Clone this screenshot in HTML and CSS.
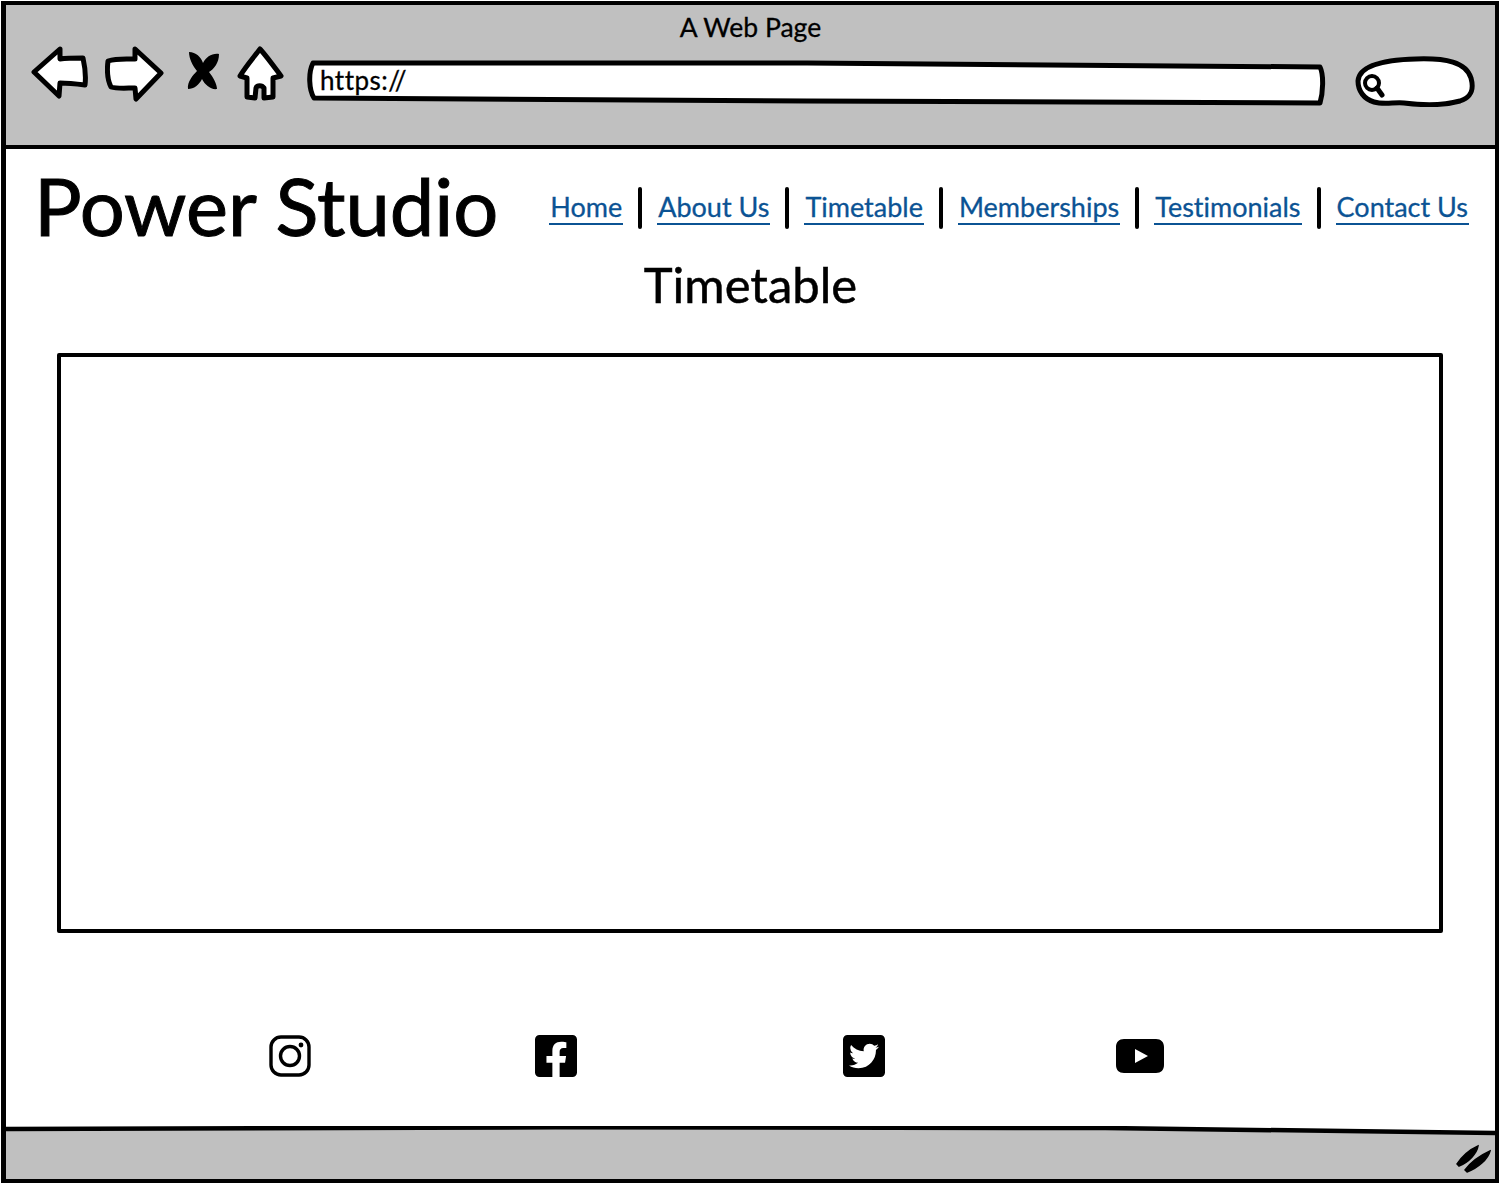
FILE: index.html
```html
<!DOCTYPE html>
<html lang="en">
<head>
  <meta charset="UTF-8">
  <title>Power Studio - Timetable</title>
  <link rel="stylesheet" href="styles.css">
</head>
<body>
  <div class="window">
    <div class="browser-bar">
      <div class="page-title">A Web Page</div>
      <div class="toolbar">
        <svg class="tool back" viewBox="0 0 58 62"><path d="M29 4 L3 27 L28 51 L29 38 C38 38 46 39 54 40 C55 32 54 22 52 13 C44 13 36 13 29 14 Z" fill="#fff" stroke="#000" stroke-width="5" stroke-linejoin="round"/></svg>
        <svg class="tool forward" viewBox="0 0 60 62"><path d="M30 4 L56 28 L31 54 L30 43 C22 43 12 44 6 42 C2 34 2 24 3 16 C12 13 22 14 30 14 Z" fill="#fff" stroke="#000" stroke-width="5" stroke-linejoin="round"/></svg>
        <svg class="tool stop" viewBox="0 0 34 62"><path d="M3 7 C10 7 15 12 17 18 C20 12 26 8 33 9 C33 18 28 24 23 27 C27 32 31 39 31 44 C25 45 19 40 16 34 C13 40 8 44 2 44 C1 37 7 30 11 26 C7 21 3 14 3 7 Z" fill="#000"/></svg>
        <svg class="tool home" viewBox="0 0 47 62"><path d="M23 4 C31 13 38 23 44 31 L36 33 L36 52 L27 53 L27 43 C25 40 20 40 19 43 L18 53 L10 52 L10 33 L3 31 C9 21 17 12 23 4 Z" fill="#fff" stroke="#000" stroke-width="5" stroke-linejoin="round"/></svg>
        <div class="url-bar">
          <svg class="url-shape" viewBox="0 0 1020 62" preserveAspectRatio="none"><path d="M6 18 L500 18 C700 18 860 20 1013 22 C1017 30 1016 48 1013 58 L500 56 L7 53 C2 45 1 28 6 18 Z" fill="#fff" stroke="#000" stroke-width="5" stroke-linejoin="round"/></svg>
          <span class="url-text">https://</span>
        </div>
        <svg class="tool search" viewBox="0 0 122 62"><path d="M4 36 C5 22 24 15 62 14 C92 13 112 17 117 33 C120 44 118 52 106 56 C88 61 66 60 50 58 C40 57 30 60 20 57 C10 54 4 46 4 36 Z" fill="#fff" stroke="#000" stroke-width="5"/><circle cx="18" cy="38" r="7" fill="none" stroke="#000" stroke-width="4"/><path d="M23 43 L28 50" stroke="#000" stroke-width="5" stroke-linecap="round"/></svg>
      </div>
    </div>

    <div class="page">
      <div class="site-header">
        <h1>Power Studio</h1>
        <nav class="nav">
          <a href="#">Home</a><span class="sep"></span>
          <a href="#">About Us</a><span class="sep"></span>
          <a href="#">Timetable</a><span class="sep"></span>
          <a href="#">Memberships</a><span class="sep"></span>
          <a href="#">Testimonials</a><span class="sep"></span>
          <a href="#">Contact Us</a>
        </nav>
      </div>

      <h2>Timetable</h2>
      <div class="timetable"></div>

      <div class="socials">
        <svg class="social" viewBox="0 0 42 42"><rect x="2" y="2" width="38" height="38" rx="10" fill="none" stroke="#000" stroke-width="3.4"/><circle cx="21" cy="21" r="9.5" fill="none" stroke="#000" stroke-width="3.4"/><circle cx="32" cy="10" r="2.4" fill="#000"/></svg>
        <svg class="social" viewBox="0 32 448 448"><path d="M400 32H48A48 48 0 0 0 0 80v352a48 48 0 0 0 48 48h137.25V327.69h-63V256h63v-54.64c0-62.15 37-96.48 93.67-96.48 27.14 0 55.52 4.84 55.52 4.84v61h-31.27c-30.81 0-40.42 19.12-40.42 38.73V256h68.78l-11 71.69h-57.78V480H400a48 48 0 0 0 48-48V80a48 48 0 0 0-48-48z"/></svg>
        <svg class="social" viewBox="0 32 448 448"><path d="M400 32H48C21.5 32 0 53.5 0 80v352c0 26.5 21.5 48 48 48h352c26.5 0 48-21.5 48-48V80c0-26.5-21.5-48-48-48zm-48.9 158.8c.2 2.8.2 5.7.2 8.5 0 86.7-66 186.6-186.6 186.6-37.2 0-71.7-10.8-100.7-29.4 5.3.6 10.4.8 15.8.8 30.7 0 58.9-10.4 81.4-28-28.8-.6-53-19.5-61.3-45.5 10.1 1.5 19.2 1.5 29.6-1.2-30-6.1-52.5-32.5-52.5-64.4v-.8c8.7 4.9 18.9 7.9 29.6 8.3a65.447 65.447 0 0 1-29.2-54.6c0-12.2 3.2-23.4 8.9-33.1 32.3 39.8 80.8 65.8 135.2 68.6-9.3-44.5 24-80.6 64-80.6 18.9 0 35.9 7.9 47.9 20.7 14.8-2.8 29-8.3 41.6-15.8-4.9 15.2-15.2 28-28.8 36.1 13.2-1.4 26-5.1 37.8-10.2-8.9 13.1-20.1 24.7-32.9 34z"/></svg>
        <svg class="social youtube" viewBox="0 0 48 34"><path d="M8 0 H40 C45 0 48 3 48 8 V26 C48 31 45 34 40 34 H8 C3 34 0 31 0 26 V8 C0 3 3 0 8 0 Z M19 10 V24 L32 17 Z" fill-rule="evenodd"/></svg>
      </div>
    </div>

    <svg class="status-bar" viewBox="0 0 1490 53" preserveAspectRatio="none">
      <path d="M0 3 C300 1 800 1 1100 2 C1250 3 1400 5 1490 7 V53 H0 Z" fill="#c0c0c0"/>
      <path d="M0 3 C300 1 800 1 1100 2 C1250 3 1400 5 1490 7" fill="none" stroke="#000" stroke-width="4.5"/>
      <path d="M1452 38 C1458 29 1464 24 1473 20 C1472 27 1464 36 1454 40 Z M1460 44 C1466 36 1474 30 1485 25 C1483 33 1473 42 1462 46 Z" stroke="#000" stroke-width="1.5"/>
    </svg>
  </div>
</body>
</html>
```

FILE: styles.css
```css
* {
  box-sizing: border-box;
}
body {
  margin: 0;
  padding: 1px;
  background: white;
  font-family: Lato, "Noto Sans", sans-serif;
  font-variant-ligatures: none;
  color: black;
}
.window {
  height: 1182px;
  border: 4px solid black;
  border-left-width: 5px;
  display: flex;
  flex-direction: column;
}
.browser-bar {
  height: 144px;
  flex: none;
  background: #c0c0c0;
  border-bottom: 4px solid black;
}
.page-title {
  height: 40px;
  line-height: 44px;
  font-size: 26.5px;
  text-align: center;
  -webkit-text-stroke: 0.3px black;
}
.toolbar {
  display: flex;
  padding-left: 25px;
}
.tool {
  height: 62px;
  flex: none;
}
.back {
  width: 58px;
}
.forward {
  width: 60px;
  margin-left: 16px;
}
.stop {
  width: 34px;
  margin-left: 21px;
}
.home {
  width: 47px;
  margin-left: 17px;
}
.url-bar {
  position: relative;
  width: 1020px;
  height: 62px;
  margin-left: 23px;
}
.url-shape {
  position: absolute;
  inset: 0;
  width: 100%;
  height: 100%;
}
.url-text {
  position: absolute;
  left: 13px;
  top: 19px;
  font-size: 26px;
  line-height: 32px;
  letter-spacing: 0.5px;
  -webkit-text-stroke: 0.3px black;
}
.search {
  width: 122px;
  margin-left: 27px;
}
.page {
  flex: 1;
  background: white;
  min-height: 0;
}
.site-header {
  display: flex;
  align-items: center;
  justify-content: space-between;
  height: 104px;
  padding: 10px 26px 0 28px;
}
h1 {
  margin: 0;
  font-size: 79.5px;
  font-weight: 400;
  line-height: 100px;
  white-space: nowrap;
  -webkit-text-stroke: 1px black;
}
.nav {
  display: flex;
  align-items: center;
  gap: 15px;
  margin-top: 3px;
}
.nav a {
  color: #0b5394;
  font-size: 27px;
  line-height: 32px;
  white-space: nowrap;
  text-decoration: none;
  border-bottom: 2px solid #0b5394;
  padding: 0 1px;
  -webkit-text-stroke: 0.3px #0b5394;
}
.sep {
  width: 4px;
  height: 42px;
  background: black;
  border-radius: 2px;
}
h2 {
  margin: 0;
  height: 100px;
  padding-top: 1px;
  font-size: 49px;
  font-weight: 400;
  line-height: 60px;
  text-align: center;
  -webkit-text-stroke: 0.5px black;
}
.timetable {
  height: 580px;
  margin: 0 52px 0 51px;
  border: 4px solid black;
  border-radius: 2px;
  background: white;
}
.socials {
  display: grid;
  grid-template-columns: 266px 308px 273px auto;
  align-items: center;
  height: 42px;
  margin-top: 102px;
  padding-left: 263px;
}
.social {
  width: 42px;
  height: 42px;
}
.youtube {
  width: 48px;
  height: 34px;
}
.status-bar {
  display: block;
  width: 100%;
  height: 53px;
  flex: none;
}
```
